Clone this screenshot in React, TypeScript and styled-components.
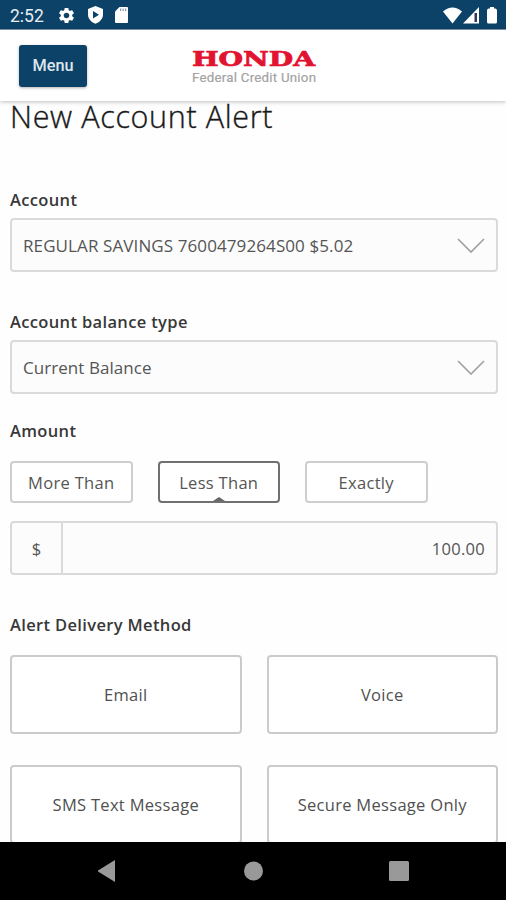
import React from "react";
import styled, { createGlobalStyle } from "styled-components";
import { MdSettings } from "react-icons/md";

const GlobalStyle = createGlobalStyle`
  * { box-sizing: border-box; }
  html, body { margin: 0; padding: 0; background: #fff; }
  body { overflow: hidden; }
  button { font: inherit; }
`;

const Screen = styled.div`
  width: 506px;
  height: 900px;
  display: flex;
  flex-direction: column;
  overflow: hidden;
  background: #fefefe;
  color: #555;
  font-family: "Open Sans", "Noto Sans", sans-serif;
`;

const StatusBar = styled.div`
  flex: 0 0 30px;
  display: flex;
  align-items: center;
  justify-content: space-between;
  padding: 1px 8px 0 10px;
  background: #0c4267;
  border-bottom: 1px solid #8493ac;
`;

const StatusGroup = styled.div<{ $gap: number }>`
  display: flex;
  align-items: center;
  gap: ${(p) => p.$gap}px;
  svg { display: block; }
`;

const Clock = styled.span`
  width: 35px;
  white-space: nowrap;
  font: 400 17.5px/24px Roboto, sans-serif;
  color: #e9eef3;
  padding-top: 2px;
`;

const Header = styled.header`
  flex: 0 0 71px;
  display: grid;
  grid-template-columns: 160px 1fr 160px;
  align-items: start;
  padding: 15px 19px 0;
  background: #fff;
  box-shadow: 0 1px 4px rgba(0, 0, 0, 0.25);
  z-index: 1;
`;

const MenuButton = styled.button`
  width: 68px;
  height: 42px;
  padding: 0 0 1px;
  border: 0;
  border-radius: 3px;
  background: #0c4267;
  color: #dfe7ee;
  font: 500 16.3px/20px Roboto, sans-serif;
  box-shadow: 0 1px 3px rgba(0, 0, 0, 0.3);
`;

const Logo = styled.svg`
  display: block;
  justify-self: center;
  margin: 2px 0 0 1px;
`;

const Content = styled.main`
  flex: 1 1 0;
  min-height: 0;
  padding: 0 8px 0 10px;
`;

const Title = styled.h1`
  margin: 0;
  font-size: 30.5px;
  line-height: 30px;
  font-weight: 300;
  letter-spacing: 0.65px;
  color: #181818;
  -webkit-text-stroke: 0.35px #181818;
  white-space: nowrap;
`;

const Label = styled.h2<{ $top: number }>`
  margin: ${(p) => p.$top}px 0 0;
  font-size: 16.5px;
  line-height: 24px;
  font-weight: 600;
  letter-spacing: 0.35px;
  color: #383838;
`;

const Select = styled.div<{ $spacing: number }>`
  display: flex;
  align-items: center;
  justify-content: space-between;
  height: 54px;
  margin-top: 6px;
  padding: 0 11px;
  border: 2px solid #dadada;
  border-radius: 4px;
  background: #fcfcfc;
  font-size: 17px;
  letter-spacing: ${(p) => p.$spacing}px;
`;

const ToggleRow = styled.div`
  display: flex;
  gap: 25px;
  margin-top: 18px;
`;

const Toggle = styled.button<{ $active?: boolean }>`
  position: relative;
  width: 122.5px;
  height: 42px;
  padding: 0;
  border: 2px solid ${(p) => (p.$active ? "#707070" : "#cecece")};
  border-radius: 4px;
  background: #fff;
  color: #555;
  font-size: 16.5px;
  letter-spacing: 0.3px;
`;

const Caret = styled.svg`
  position: absolute;
  left: 50%;
  bottom: 0;
  margin-left: -6px;
`;

const AmountField = styled.div`
  display: grid;
  grid-template-columns: 51px 1fr;
  height: 54px;
  margin-top: 18px;
  border: 2px solid #dadada;
  border-radius: 4px;
  background: #fcfcfc;
  font-size: 16.5px;
  line-height: 51px;
`;

const Currency = styled.span`
  border-right: 2px solid #dadada;
  text-align: center;
`;

const Amount = styled.span`
  padding-right: 11px;
  text-align: right;
  letter-spacing: 0.3px;
`;

const MethodGrid = styled.div`
  display: grid;
  grid-template-columns: 1fr 1fr;
  gap: 31px 25px;
  margin-top: 18px;
`;

const Method = styled.button`
  height: 79px;
  padding: 0;
  border: 2px solid #cbcbcb;
  border-radius: 4px;
  background: #fff;
  color: #505050;
  font-size: 16.5px;
  letter-spacing: 0.3px;
`;

const NavBar = styled.nav`
  flex: 0 0 58px;
  display: grid;
  grid-template-columns: repeat(3, 146px);
  justify-content: center;
  align-items: center;
  justify-items: center;
  background: #000;
  z-index: 1;
`;

const Chevron = () => (
  <svg width="28" height="16" viewBox="0 0 28 16" fill="none" stroke="#a2a2a2" strokeWidth="1.7">
    <path d="M1 2 14 15 27 2" />
  </svg>
);

const methods = ["Email", "Voice", "SMS Text Message", "Secure Message Only"];

export default function App() {
  return (
    <Screen>
      <GlobalStyle />
      <StatusBar>
        <StatusGroup $gap={12}>
          <Clock>2:52</Clock>
          <MdSettings size={19} color="#fff" />
          <svg width="15" height="18" viewBox="0 0 15 18">
            <path fill="#fff" fillRule="evenodd" d="M7.5 0 15 3v5.300c0 4.500-3 7.900-7.500 9.400C3 16.200 0 12.800 0 8.300V3zM5 5v7.500l6-3.750z" />
          </svg>
          <svg width="13" height="16" viewBox="0 0 13 16">
            <path fill="#fff" d="M4.500 0H12q1 0 1 1v14q0 1-1 1H1q-1 0-1-1V4.500z" />
            <path fill="#8a9cae" d="M5 1.500h1.200v2.500H5zM7.500 1.500h1.200v2.500H7.500zM10 1.500h1.200v2.500H10z" />
          </svg>
        </StatusGroup>
        <StatusGroup $gap={1}>
          <svg width="19" height="17" viewBox="0 0 19 17">
            <path fill="#fff" d="M0 4.500Q9.500-3.500 19 4.500L9.500 16.500z" />
          </svg>
          <svg width="17" height="17" viewBox="0 0 17 17">
            <path fill="#fff" d="M16 0v16.500H0z" />
            <path fill="#33345f" d="M11.500 6h2.500v9h-2.500z" />
          </svg>
          <svg width="17" height="17" viewBox="0 0 17 17">
            <path fill="#fff" d="M9 0h4v1.500H14.500q1.500.5 1.500 2V15q0 1.500-1.500 1.500H7.500Q6 16.500 6 15V3.500Q6 2 7.500 1.500H9z" />
          </svg>
        </StatusGroup>
      </StatusBar>
      <Header>
        <MenuButton>Menu</MenuButton>
        <Logo width="126" height="40" viewBox="0 0 126 40">
          <text x="1" y="18.500" fill="#e21330" stroke="#e21330" strokeWidth="0.7" fontFamily="DejaVu Serif, serif" fontWeight="700" fontSize="19.500" textLength="123" lengthAdjust="spacingAndGlyphs">HONDA</text>
          <text x="1" y="34.500" fill="#a3a3a3" stroke="#a3a3a3" strokeWidth="0.2" fontFamily="Roboto, sans-serif" fontSize="13.300" textLength="124" lengthAdjust="spacing">Federal Credit Union</text>
        </Logo>
      </Header>
      <Content>
        <Title>New Account Alert</Title>
        <Label $top={57}>Account</Label>
        <Select $spacing={0.1}>
          REGULAR SAVINGS 7600479264S00 $5.02
          <Chevron />
        </Select>
        <Label $top={38}>Account balance type</Label>
        <Select $spacing={0.05}>
          Current Balance
          <Chevron />
        </Select>
        <Label $top={25}>Amount</Label>
        <ToggleRow>
          <Toggle>More Than</Toggle>
          <Toggle $active>
            Less Than
            <Caret width="12" height="4" viewBox="0 0 12 4">
              <path d="M0 4 6 0l6 4z" fill="#666" />
            </Caret>
          </Toggle>
          <Toggle>Exactly</Toggle>
        </ToggleRow>
        <AmountField>
          <Currency>$</Currency>
          <Amount>100.00</Amount>
        </AmountField>
        <Label $top={38}>Alert Delivery Method</Label>
        <MethodGrid>
          {methods.map((name) => (
            <Method key={name}>{name}</Method>
          ))}
        </MethodGrid>
      </Content>
      <NavBar>
        <svg width="18" height="22" viewBox="0 0 18 22"><path fill="#999" d="M0 11 18 0v22z" transform="translate(-1 0)" /></svg>
        <svg width="20" height="20" viewBox="0 0 20 20"><circle cx="10.500" cy="10" r="9.500" fill="#999" /></svg>
        <svg width="20" height="20" viewBox="0 0 20 20"><rect width="20" height="20" rx="1.500" fill="#999" /></svg>
      </NavBar>
    </Screen>
  );
}
